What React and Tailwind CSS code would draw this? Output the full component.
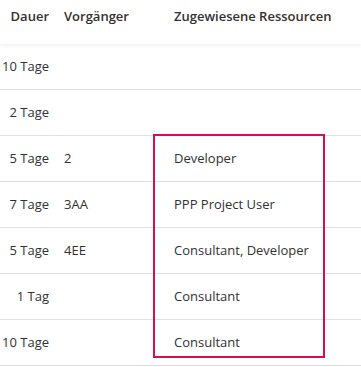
const rows = [
  { dauer: '10 Tage', vorg: '', res: '' },
  { dauer: '2 Tage', vorg: '', res: '' },
  { dauer: '5 Tage', vorg: '2', res: 'Developer' },
  { dauer: '7 Tage', vorg: '3AA', res: 'PPP Project User' },
  { dauer: '5 Tage', vorg: '4EE', res: 'Consultant, Developer' },
  { dauer: '1 Tag', vorg: '', res: 'Consultant' },
  { dauer: '10 Tage', vorg: '', res: 'Consultant' },
];

const Cells = ({ a, b, c }) => (
  <>
    <div className="w-[57px] shrink-0 pr-2 text-right whitespace-nowrap">{a}</div>
    <div className="w-[110px] shrink-0 pl-[7px] whitespace-nowrap">{b}</div>
    <div className="flex-1 pl-[7px] whitespace-nowrap">{c}</div>
  </>
);

export default function App() {
  return (
    <div className="relative w-[361px] h-[367px] bg-white overflow-hidden font-['Segoe_UI','Open_Sans',sans-serif] text-[13px] text-[#323130]">
      {/* header */}
      <div className="relative z-10 flex items-center h-[44px] pb-[10px] bg-white font-semibold shadow-[0_2px_4px_rgba(0,0,0,0.06)]">
        <Cells a="Dauer" b="Vorgänger" c="Zugewiesene Ressourcen" />
      </div>
      {rows.map((r, i) => (
        <div key={i} className="flex items-center h-[46px] border-b border-[#e1dfdd]">
          <Cells a={r.dauer} b={r.vorg} c={r.res} />
        </div>
      ))}
      {/* highlight around assigned resources */}
      <div className="absolute left-[153px] top-[134px] w-[172px] h-[224px] border-2 border-[#dc0a52]" />
    </div>
  );
}
